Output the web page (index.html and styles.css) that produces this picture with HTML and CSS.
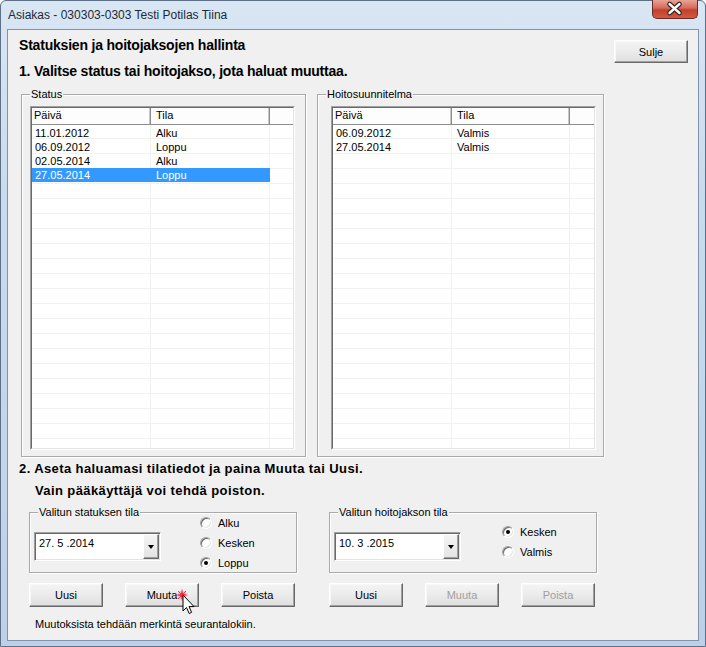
FILE: index.html
```html
<!DOCTYPE html>
<html lang="fi">
<head>
<meta charset="utf-8">
<title>Asiakas</title>
<link rel="stylesheet" href="styles.css">
</head>
<body>
<div class="window">
  <div class="titlebar">
    <span class="title">Asiakas - 030303-0303 Testi Potilas Tiina</span>
    <div class="close-x">
      <svg width="46" height="19" viewBox="0 0 46 19">
        <path d="M18 5 L28 14 M28 5 L18 14" stroke="#3a2a2a" stroke-width="5" stroke-linecap="round"/>
        <path d="M18 5 L28 14 M28 5 L18 14" stroke="#ffffff" stroke-width="2.6" stroke-linecap="round"/>
      </svg>
    </div>
  </div>
  <div class="client">
    <div class="top">
      <div class="headings">
        <h1 class="h-main">Statuksien ja hoitojaksojen hallinta</h1>
        <h2 class="h-step1">1. Valitse status tai hoitojakso, jota haluat muuttaa.</h2>
      </div>
      <button class="btn btn-sulje">Sulje</button>
    </div>

    <div class="lists">
      <div class="group group-list group-status">
        <span class="legend">Status</span>
        <div class="listview">
          <div class="lv-inner">
            <div class="lv-header">
              <div class="hc col1">Päivä</div>
              <div class="hc col2">Tila</div>
              <div class="hc col3"></div>
            </div>
            <div class="lv-body">
              <div class="lv-row"><span class="cell col1">11.01.2012</span><span class="cell col2">Alku</span></div>
              <div class="lv-row"><span class="cell col1">06.09.2012</span><span class="cell col2">Loppu</span></div>
              <div class="lv-row"><span class="cell col1">02.05.2014</span><span class="cell col2">Alku</span></div>
              <div class="lv-row selected"><span class="cell col1">27.05.2014</span><span class="cell col2">Loppu</span></div>
            </div>
          </div>
        </div>
      </div>
      <div class="group group-list group-plan">
        <span class="legend">Hoitosuunnitelma</span>
        <div class="listview">
          <div class="lv-inner">
            <div class="lv-header">
              <div class="hc col1">Päivä</div>
              <div class="hc col2 narrow">Tila</div>
              <div class="hc col3"></div>
            </div>
            <div class="lv-body lv-body-plan">
              <div class="lv-row plan"><span class="cell col1">06.09.2012</span><span class="cell col2">Valmis</span></div>
              <div class="lv-row plan"><span class="cell col1">27.05.2014</span><span class="cell col2">Valmis</span></div>
            </div>
          </div>
        </div>
      </div>
    </div>

    <div class="section2">
      <p class="step2">2. Aseta haluamasi tilatiedot ja paina Muuta tai Uusi.</p>
      <p class="step2 sub">Vain pääkäyttäjä voi tehdä poiston.</p>
    </div>

    <div class="edit">
      <div class="edit-col">
        <div class="group group-small">
          <span class="legend">Valitun statuksen tila</span>
          <div class="combo">
            <span class="combo-text">27. 5 .2014</span>
            <span class="combo-btn"><span class="tri"></span></span>
          </div>
          <div class="radios">
            <div class="radio-row"><span class="radio"></span><span>Alku</span></div>
            <div class="radio-row"><span class="radio"></span><span>Kesken</span></div>
            <div class="radio-row"><span class="radio checked"></span><span>Loppu</span></div>
          </div>
        </div>
        <div class="btn-row">
          <button class="btn">Uusi</button>
          <button class="btn btn-cursor">Muuta
            <svg class="cursor" width="26" height="28" viewBox="0 0 26 28">
              <circle cx="7" cy="7" r="4.5" fill="#ff8aa0" opacity="0.45"/>
              <path d="M7 0.5 L8 6 L13.5 7 L8 8 L7 13.5 L6 8 L0.5 7 L6 6 Z" fill="#ff1a2e"/>
              <path d="M3 3 L11 11 M11 3 L3 11" stroke="#ff3040" stroke-width="1"/>
              <path d="M8 7 L8 23 L11.5 19.5 L14.2 25.5 L16.6 24.4 L14 18.6 L19 18.6 Z" fill="#ffffff" stroke="#000" stroke-width="1" stroke-linejoin="miter"/>
            </svg>
          </button>
          <button class="btn">Poista</button>
        </div>
      </div>
      <div class="edit-col edit-col-right">
        <div class="group group-small">
          <span class="legend">Valitun hoitojakson tila</span>
          <div class="combo">
            <span class="combo-text">10. 3 .2015</span>
            <span class="combo-btn"><span class="tri"></span></span>
          </div>
          <div class="radios radios-right">
            <div class="radio-row"><span class="radio checked"></span><span>Kesken</span></div>
            <div class="radio-row"><span class="radio"></span><span>Valmis</span></div>
          </div>
        </div>
        <div class="btn-row">
          <button class="btn">Uusi</button>
          <button class="btn disabled">Muuta</button>
          <button class="btn disabled">Poista</button>
        </div>
      </div>
    </div>

    <p class="footnote">Muutoksista tehdään merkintä seurantalokiin.</p>
  </div>
</div>
</body>
</html>
```

FILE: styles.css
```css
html, body {
  margin: 0;
  padding: 0;
  background: #ffffff;
}

.window {
  box-sizing: border-box;
  width: 706px;
  height: 647px;
  display: flex;
  flex-direction: column;
  border: 1px solid #5d7085;
  border-radius: 6px 6px 0 0;
  background: linear-gradient(to bottom, #d9e6f4 0%, #c9dbee 30%, #bcd1e9 100%);
  font-family: "Liberation Sans", Arial, sans-serif;
}

.titlebar {
  height: 28px;
  display: flex;
  align-items: flex-start;
  flex-shrink: 0;
}

.title {
  font-family: "Liberation Sans", Arial, sans-serif;
  font-size: 12px;
  color: #1e2a36;
  line-height: 16px;
  margin: 6px 0 0 7px;
}

.close-x {
  margin-left: auto;
  margin-right: 7px;
  width: 46px;
  height: 19px;
  box-sizing: border-box;
  border: 1px solid #6a2c26;
  border-top: none;
  border-radius: 0 0 5px 5px;
  background: linear-gradient(to bottom, #e8a394 0%, #d46a58 45%, #c2402f 55%, #d15a3f 100%);
  display: flex;
  margin-top: -1px;
}

.close-x svg {
  display: block;
  margin: -1px 0 0 -1px;
}

.client {
  flex: 1;
  margin: 0 6px 5px 6px;
  border: 1px solid #8193a8;
  background: #f0f0f0;
  display: flex;
  flex-direction: column;
  font-size: 11px;
  color: #000;
}

/* ---------- top ---------- */
.top {
  display: flex;
  justify-content: space-between;
  align-items: flex-start;
  height: 50px;
}

.headings {
  padding-top: 6px;
  margin-left: 11px;
}

.h-main, .h-step1 {
  margin: 0;
  font-family: "Liberation Sans", Arial, sans-serif;
  font-weight: bold;
  font-size: 14px;
  letter-spacing: -0.2px;
  line-height: 18px;
  color: #000;
}

.h-step1 {
  margin-top: 8px;
}

/* ---------- buttons ---------- */
.btn {
  box-sizing: border-box;
  width: 74px;
  height: 24px;
  padding: 0;
  margin: 0;
  font-family: "Liberation Sans", Arial, sans-serif;
  font-size: 11px;
  color: #000;
  background: linear-gradient(to bottom, #f4f4f4 0%, #ebebeb 50%, #dedede 100%);
  border: 1px solid;
  border-color: #ffffff #696969 #696969 #ffffff;
  box-shadow: inset -1px -1px 0 #a0a0a0, inset 1px 1px 0 #f8f8f8;
  position: relative;
}

.btn.disabled {
  color: #a0a0a0;
}

.btn-sulje {
  margin-top: 10px;
  margin-right: 10px;
  height: 23px;
}

.cursor {
  position: absolute;
  left: 49px;
  top: 4px;
}

/* ---------- group boxes ---------- */
.group {
  position: relative;
  box-sizing: border-box;
  border: 1px solid #a9a9a9;
  box-shadow: inset 1px 1px 0 #ffffff, 1px 1px 0 #ffffff;
}

.legend {
  position: absolute;
  top: -7px;
  left: 8px;
  padding: 0 1px 0 1px;
  background: #f0f0f0;
  font-size: 11px;
  line-height: 13px;
  color: #000;
}

.lists {
  display: flex;
  margin: 14px 0 0 13px;
  gap: 11px;
}

.group-list {
  height: 363px;
  padding: 11px 0 0 8px;
}

.group-status {
  width: 285px;
}

.group-plan {
  width: 287px;
  padding-left: 13px;
}

.listview {
  box-sizing: border-box;
  width: 265px;
  height: 344px;
  border: 1px solid;
  border-color: #a0a0a0 #ffffff #ffffff #a0a0a0;
  background: #ffffff;
}

.lv-inner {
  box-sizing: border-box;
  height: 100%;
  border: 1px solid;
  border-color: #696969 #e3e3e3 #e3e3e3 #696969;
  display: flex;
  flex-direction: column;
}

.lv-header {
  display: flex;
  height: 16px;
  flex-shrink: 0;
  background: #fdfdfd;
  border-bottom: 1px solid #8c8c8c;
}

.hc {
  box-sizing: border-box;
  height: 16px;
  line-height: 15px;
  padding-left: 2px;
  border-right: 1px solid #8c8c8c;
  box-shadow: inset -1px 0 0 #c8c8c8;
  white-space: nowrap;
}

.hc.col1 { width: 119px; }
.hc.col2 { width: 119px; padding-left: 5px; }
.hc.col2.narrow { width: 118px; }
.hc.col3 { flex: 1; border-right: none; box-shadow: none; }

.lv-body {
  flex: 1;
  padding-top: 1px;
  background-image:
    linear-gradient(to right, transparent 118px, #f1f1f1 118px, #f1f1f1 119px, transparent 119px),
    linear-gradient(to right, transparent 237px, #f1f1f1 237px, #f1f1f1 238px, transparent 238px),
    repeating-linear-gradient(to bottom, transparent 0, transparent 14px, #f1f1f1 14px, #f1f1f1 15px);
  background-position: 0 0, 0 0, 0 -1px;
}

.lv-body-plan {
  background-image:
    linear-gradient(to right, transparent 118px, #f1f1f1 118px, #f1f1f1 119px, transparent 119px),
    linear-gradient(to right, transparent 236px, #f1f1f1 236px, #f1f1f1 237px, transparent 237px),
    repeating-linear-gradient(to bottom, transparent 0, transparent 14px, #f1f1f1 14px, #f1f1f1 15px);
}

.lv-row {
  display: grid;
  grid-template-columns: 119px 119px;
  height: 14px;
  line-height: 14px;
}

.lv-row.plan {
  grid-template-columns: 119px 118px;
}

.cell {
  white-space: nowrap;
}

.cell.col1 { padding-left: 3px; }
.cell.col2 { padding-left: 5px; }

.lv-row.selected .cell {
  background: #3399ff;
  color: #ffffff;
}

/* ---------- section 2 ---------- */
.section2 {
  margin-top: 1px;
}

.step2 {
  margin: 0 0 0 11px;
  font-family: "Liberation Sans", Arial, sans-serif;
  font-weight: bold;
  font-size: 13px;
  letter-spacing: 0.4px;
  line-height: 22px;
}

.step2.sub {
  margin-left: 27px;
}

/* ---------- edit ---------- */
.edit {
  display: flex;
  gap: 32px;
  margin: 10px 0 0 21px;
}

.edit-col {
  width: 268px;
  display: flex;
  flex-direction: column;
}

.edit-col-right {
  width: 268px;
}

.group-small {
  height: 61px;
  display: flex;
  align-items: flex-start;
  padding-left: 4px;
}

.combo {
  box-sizing: border-box;
  margin-top: 19px;
  width: 127px;
  height: 29px;
  display: flex;
  border: 1px solid;
  border-color: #a0a0a0 #ffffff #ffffff #a0a0a0;
  background: #ffffff;
  box-shadow: inset 1px 1px 0 #696969, inset -1px -1px 0 #e3e3e3;
  padding: 1px;
}

.combo-text {
  flex: 1;
  padding: 2px 0 0 3px;
  line-height: 15px;
  white-space: pre;
  font-family: "Liberation Sans", Arial, sans-serif;
  font-size: 11px;
}

.combo-btn {
  box-sizing: border-box;
  width: 16px;
  height: 25px;
  background: linear-gradient(to bottom, #f4f4f4, #e4e4e4);
  border: 1px solid;
  border-color: #ffffff #696969 #696969 #ffffff;
  box-shadow: inset -1px -1px 0 #a0a0a0;
  display: flex;
  align-items: center;
  justify-content: center;
}

.tri {
  width: 0;
  height: 0;
  border-left: 3.5px solid transparent;
  border-right: 3.5px solid transparent;
  border-top: 4px solid #000;
  margin-top: 1px;
}

.radios {
  margin-left: 39px;
  display: flex;
  flex-direction: column;
}

.radios-right {
  margin-top: 9px;
  margin-left: 41px;
}

.radio-row {
  display: flex;
  align-items: center;
  gap: 6px;
  height: 20px;
  font-size: 11px;
}

.radio-row:nth-child(3) {
  height: 19px;
}

.radio {
  position: relative;
  box-sizing: border-box;
  width: 12px;
  height: 12px;
  border-radius: 50%;
  background: #ffffff;
  border: 1px solid;
  border-color: #a0a0a0 #ffffff #ffffff #a0a0a0;
  box-shadow: inset 1px 1px 0 #696969, inset -1px -1px 0 #e3e3e3;
}

.radio.checked::after {
  content: "";
  position: absolute;
  left: 3px;
  top: 3px;
  width: 4px;
  height: 4px;
  border-radius: 50%;
  background: #000;
}

.btn-row {
  display: flex;
  gap: 22px;
  margin-top: 10px;
}

.footnote {
  margin: 9px 0 0 27px;
  font-size: 11px;
  line-height: 16px;
}
```
